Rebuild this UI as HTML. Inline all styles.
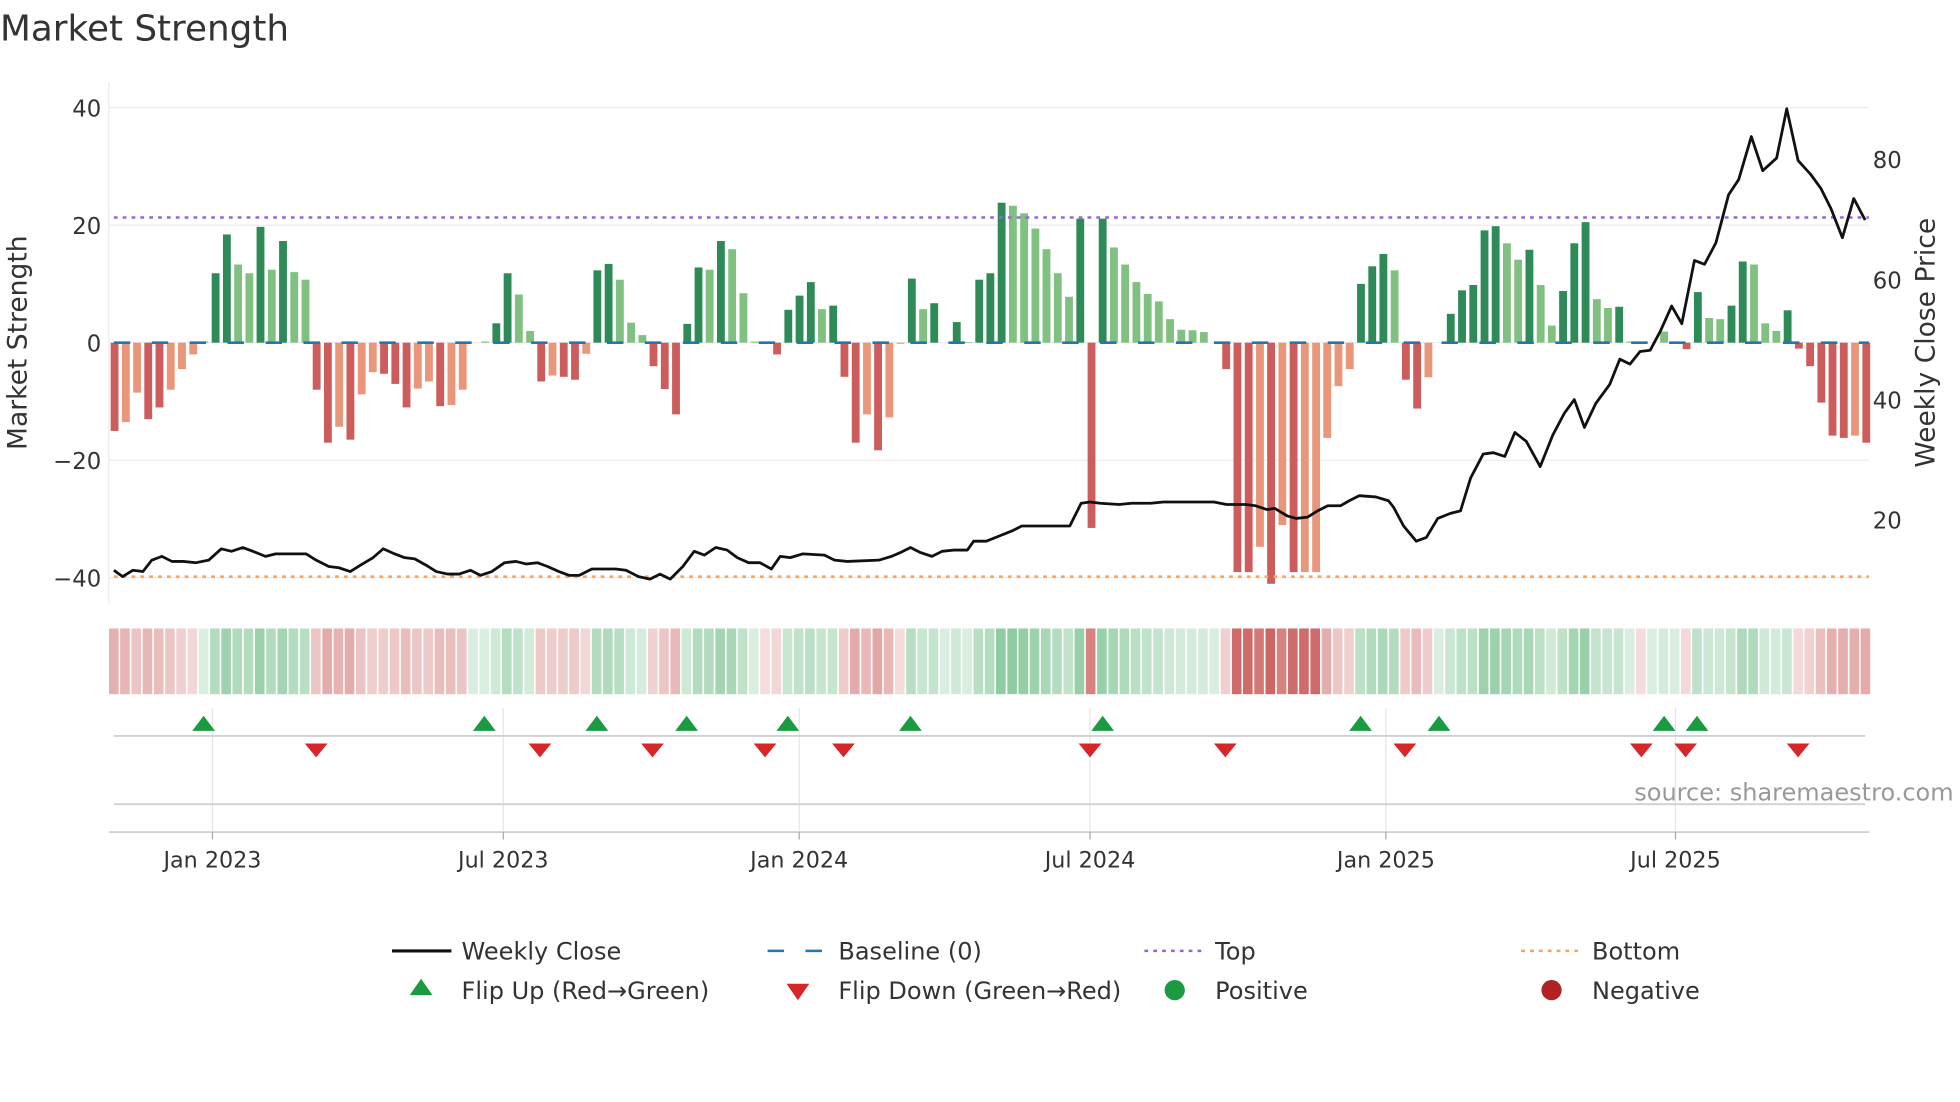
<!DOCTYPE html>
<html><head><meta charset="utf-8"><style>
html,body{margin:0;padding:0;background:#fff;}
svg{display:block;}
text{font-family:"DejaVu Sans","Liberation Sans",sans-serif;fill:#333;}
</style></head><body>
<svg id="s" width="1960" height="1102" viewBox="0 0 1550 871.5" xmlns="http://www.w3.org/2000/svg">
<text x="0" y="32" font-size="28.3">Market Strength</text>
<g stroke="#ececec" stroke-width="1">
<line x1="86" y1="85" x2="1478" y2="85"/><line x1="86" y1="178" x2="1478" y2="178"/>
<line x1="86" y1="271" x2="1478" y2="271"/><line x1="86" y1="364" x2="1478" y2="364"/>
<line x1="86" y1="457" x2="1478" y2="457"/>
<line x1="86" y1="65" x2="86" y2="478"/>
</g>
<g font-size="18">
<text x="80" y="92" text-anchor="end">40</text><text x="80" y="185" text-anchor="end">20</text>
<text x="80" y="278" text-anchor="end">0</text><text x="80" y="371" text-anchor="end">−20</text>
<text x="80" y="464" text-anchor="end">−40</text>
<text x="1481" y="133">80</text><text x="1481" y="228">60</text>
<text x="1481" y="323">40</text><text x="1481" y="418">20</text>
</g>
<text font-size="21" transform="translate(21,271) rotate(-90)" text-anchor="middle">Market Strength</text>
<text font-size="21" transform="translate(1530,271) rotate(-90)" text-anchor="middle">Weekly Close Price</text>
<g id="bars"></g>
<line x1="90" y1="271" x2="1478" y2="271" stroke="#1f77b4" stroke-width="2" stroke-dasharray="13 17"/>
<line x1="90" y1="172" x2="1478" y2="172" stroke="#9467d4" stroke-width="2" stroke-dasharray="3 4"/>
<line x1="90" y1="456" x2="1478" y2="456" stroke="#f4a460" stroke-width="2" stroke-dasharray="3 4"/>
<polyline id="price" fill="none" stroke="#111" stroke-width="2.2" stroke-linejoin="round"/>
<g id="strip"></g>
<g stroke="#e6e6e6" stroke-width="1">
<line x1="168" y1="560" x2="168" y2="658"/><line x1="398" y1="560" x2="398" y2="658"/>
<line x1="632" y1="560" x2="632" y2="658"/><line x1="862" y1="560" x2="862" y2="658"/>
<line x1="1096" y1="560" x2="1096" y2="658"/><line x1="1325" y1="560" x2="1325" y2="658"/>
</g>
<g stroke="#d0d0d0" stroke-width="1.5">
<line x1="90" y1="582" x2="1475" y2="582"/><line x1="90" y1="636" x2="1475" y2="636"/>
<line x1="86" y1="658" x2="1478" y2="658"/>
</g>
<g stroke="#aaa" stroke-width="1">
<line x1="168" y1="658" x2="168" y2="664"/><line x1="398" y1="658" x2="398" y2="664"/>
<line x1="632" y1="658" x2="632" y2="664"/><line x1="862" y1="658" x2="862" y2="664"/>
<line x1="1096" y1="658" x2="1096" y2="664"/><line x1="1325" y1="658" x2="1325" y2="664"/>
</g>
<g id="mk"></g>
<text x="1545" y="633" font-size="19" text-anchor="end" style="fill:#999">source: sharemaestro.com</text>
<g font-size="17.6" text-anchor="middle">
<text x="168" y="686">Jan 2023</text><text x="398" y="686">Jul 2023</text>
<text x="632" y="686">Jan 2024</text><text x="862" y="686">Jul 2024</text>
<text x="1096" y="686">Jan 2025</text><text x="1325" y="686">Jul 2025</text>
</g>
<g font-size="19">
<line x1="310" y1="752" x2="357" y2="752" stroke="#111" stroke-width="2.5"/>
<text x="365" y="759">Weekly Close</text>
<line x1="607" y1="752" x2="652" y2="752" stroke="#1f77b4" stroke-width="2" stroke-dasharray="13 17"/>
<text x="663" y="759">Baseline (0)</text>
<line x1="905" y1="752" x2="950" y2="752" stroke="#9467d4" stroke-width="2" stroke-dasharray="3 4"/>
<text x="961" y="759">Top</text>
<line x1="1203" y1="752" x2="1248" y2="752" stroke="#f4a460" stroke-width="2" stroke-dasharray="3 4"/>
<text x="1259" y="759">Bottom</text>
<polygon points="324,787 342,787 333,774" fill="#1a9a41"/>
<text x="365" y="790">Flip Up (Red→Green)</text>
<polygon points="622,778 640,778 631,791" fill="#d62728"/>
<text x="663" y="790">Flip Down (Green→Red)</text>
<circle cx="929" cy="783" r="8" fill="#1a9a41"/>
<text x="961" y="790">Positive</text>
<circle cx="1227" cy="783" r="8" fill="#b22222"/>
<text x="1259" y="790">Negative</text>
</g>
</svg>
<script>
var D=[[-15,'r'],[-13.5,'o'],[-8.5,'o'],[-13,'r'],[-11,'r'],[-8,'o'],[-4.5,'o'],[-2,'o'],[0.2,'l'],[11.8,'d'],[18.4,'d'],[13.3,'l'],[11.8,'l'],[19.7,'d'],[12.4,'l'],[17.3,'d'],[12,'l'],[10.7,'l'],[-8,'r'],[-17,'r'],[-14.3,'o'],[-16.5,'r'],[-8.8,'o'],[-5,'o'],[-5.3,'r'],[-7,'r'],[-11,'r'],[-7.8,'o'],[-6.6,'o'],[-10.8,'r'],[-10.6,'o'],[-8,'o'],[0,'l'],[0.2,'l'],[3.3,'d'],[11.8,'d'],[8.2,'l'],[2,'l'],[-6.6,'r'],[-5.6,'o'],[-5.8,'r'],[-6.3,'r'],[-1.9,'o'],[12.3,'d'],[13.4,'d'],[10.7,'l'],[3.4,'l'],[1.3,'l'],[-4,'r'],[-7.9,'r'],[-12.2,'r'],[3.2,'d'],[12.8,'d'],[12.4,'l'],[17.3,'d'],[15.9,'l'],[8.4,'l'],[0.2,'l'],[0,'o'],[-2,'r'],[5.6,'d'],[8,'d'],[10.3,'d'],[5.7,'l'],[6.3,'d'],[-5.8,'r'],[-17,'r'],[-12.2,'o'],[-18.3,'r'],[-12.7,'o'],[-0.2,'o'],[10.9,'d'],[5.7,'l'],[6.7,'d'],[0,'l'],[3.5,'d'],[0.1,'l'],[10.7,'d'],[11.8,'d'],
[23.8,'d'],[23.3,'l'],[22,'l'],[19.4,'l'],[15.9,'l'],[11.8,'l'],[7.8,'l'],[21.1,'d'],[-31.5,'r'],[21.1,'d'],[16.2,'l'],[13.3,'l'],[10.3,'l'],[8.3,'l'],[7,'l'],[4,'l'],[2.2,'l'],[2.1,'l'],[1.8,'l'],[0,'l'],[-4.5,'r'],[-39,'r'],[-39,'r'],[-34.7,'o'],[-41,'r'],[-31,'o'],[-39,'r'],[-39,'o'],[-39,'o'],[-16.2,'o'],[-7.4,'o'],[-4.5,'o'],[10,'d'],[13,'d'],[15.1,'d'],[12.3,'l'],[-6.3,'r'],[-11.2,'r'],[-5.9,'o'],[0,'l'],[4.9,'d'],[8.9,'d'],[9.8,'d'],[19.1,'d'],[19.8,'d'],[16.9,'l'],[14.1,'l'],[15.8,'d'],[9.8,'l'],[2.9,'l'],[8.8,'d'],[16.9,'d'],[20.5,'d'],[7.4,'l'],[5.9,'l'],[6.1,'d'],[0.2,'l'],[-0.2,'r'],[0,'l'],[1.9,'l'],[0,'l'],[-1.1,'r'],[8.6,'d'],[4.2,'l'],[4,'l'],[6.3,'d'],[13.8,'d'],[13.3,'l'],[3.3,'l'],[2,'l'],[5.5,'d'],[-1,'r'],[-4,'r'],[-10.2,'r'],[-15.8,'r'],[-16.2,'r'],[-15.8,'o'],[-17,'r']];
var C={d:'#2e8b57',l:'#80c080',r:'#cd5c5c',o:'#e9967a'};
var b='',st='';
for(var i=0;i<D.length;i++){var v=D[i][0],x=90.6+i*8.88,y0=271,h=Math.abs(v)*4.65;
 if(h>0.3)b+='<rect x="'+(x-3.1).toFixed(1)+'" y="'+(v>0?y0-h:y0).toFixed(1)+'" width="6.2" height="'+h.toFixed(1)+'" fill="'+C[D[i][1]]+'"/>';
 var g=(D[i][1]=='d'||D[i][1]=='l'),a=0.18+0.62*Math.min(Math.abs(v),41)/41;
 var base=g?[46,160,80]:[192,64,60];
 var c=base.map(function(k){return Math.round(255-(255-k)*a)});
 st+='<rect x="'+(x-4.44).toFixed(1)+'" y="497" width="7.6" height="52" fill="rgb('+c.join(',')+')"/>';}
document.getElementById('bars').innerHTML=b;document.getElementById('strip').innerHTML=st;
var P=[[90,451],[97,456],[105,451],[113,452],[120,443],[128,440],[136,444],[145,444],[155,445],[165,443],[175,434],[183,436],[192,433],[200,436],[210,440],[218,438],[235,438],[242,438],[250,443],[260,448],[268,449],[277,452],[285,447],[295,441],[303,434],[312,438],[320,441],[328,442],[337,447],[345,452],[354,454],[363,454],[372,451],[380,455],[389,452],[399,445],[408,444],[416,446],[425,445],[433,448],[442,452],[450,455],[458,455],[468,450],[477,450],[487,450],[495,451],[505,456],[514,458],[522,454],[530,458],[540,448],[549,436],[557,439],[566,433],[575,435],[583,441],[592,445],[601,445],[610,450],[617,440],[625,441],[635,438],[652,439],[660,443],[670,444],[695,443],[705,440],[712,437],[720,433],[728,437],[737,440],[745,436],[755,435],[765,435],[770,428],[780,428],[790,424],[800,420],[808,416],[846,416],[855,398],[862,397],[870,398],[885,399],[895,398],[910,398],[920,397],[960,397],[970,399],[985,399],[993,400],[1002,403],[1008,402],[1018,408],[1025,410],[1034,409],[1042,404],[1050,400],[1060,400],[1067,396],[1075,392],[1088,393],[1098,396],[1102,401],[1110,416],[1120,428],[1128,425],[1137,410],[1147,406],[1155,404],[1163,378],[1173,359],[1181,358],[1190,361],[1198,342],[1207,349],[1218,369],[1228,344],[1237,327],[1245,316],[1253,338],[1262,319],[1273,304],[1281,284],[1289,288],[1297,278],[1305,277],[1313,262],[1322,242],[1330,256],[1340,206],[1348,209],[1357,192],[1367,154],[1375,142],[1385,108],[1394,135],[1405,125],[1413,86],[1422,127],[1432,138],[1440,149],[1448,165],[1457,188],[1466,157],[1475,174]];
document.getElementById('price').setAttribute('points',P.map(function(p){return p.join(',')}).join(' '));
var up=[161,383,472,543,623,720,872,1076,1138,1316,1342],dn=[250,427,516,605,667,862,969,1111,1298,1333,1422],m='';
up.forEach(function(x){m+='<polygon points="'+(x-9)+',578 '+(x+9)+',578 '+x+',566" fill="#1a9a41"/>'});
dn.forEach(function(x){m+='<polygon points="'+(x-9)+',588 '+(x+9)+',588 '+x+',599" fill="#d62728"/>'});
document.getElementById('mk').innerHTML=m;
</script>
</body></html>
